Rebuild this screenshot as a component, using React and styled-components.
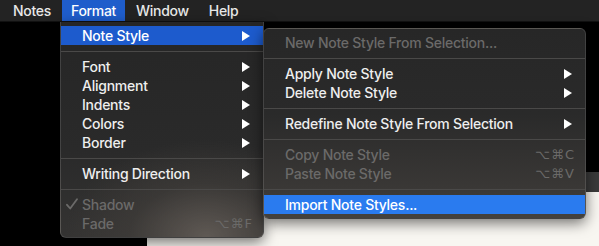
import React from "react";
import styled, { createGlobalStyle } from "styled-components";

const GlobalStyle = createGlobalStyle`
  html, body {
    margin: 0;
    padding: 0;
    background: #000;
  }
  body {
    font-family: Inter, "Noto Sans", "DejaVu Sans", sans-serif;
    -webkit-font-smoothing: antialiased;
  }
`;

const mainItems = [
  { label: "Note Style", arrow: true, active: true },
  { sep: true },
  { label: "Font", arrow: true },
  { label: "Alignment", arrow: true },
  { label: "Indents", arrow: true },
  { label: "Colors", arrow: true },
  { label: "Border", arrow: true },
  { sep: true },
  { label: "Writing Direction", arrow: true },
  { sep: true },
  { label: "Shadow", disabled: true, checked: true },
  { label: "Fade", disabled: true, shortcut: "⌥⌘F" },
];

const subItems = [
  { label: "New Note Style From Selection...", disabled: true },
  { sep: true },
  { label: "Apply Note Style", arrow: true },
  { label: "Delete Note Style", arrow: true },
  { sep: true },
  { label: "Redefine Note Style From Selection", arrow: true },
  { sep: true },
  { label: "Copy Note Style", disabled: true, shortcut: "⌥⌘C" },
  { label: "Paste Note Style", disabled: true, shortcut: "⌥⌘V" },
  { sep: true },
  { label: "Import Note Styles...", selected: true },
];

function Arrow() {
  return (
    <ArrowIcon width="8" height="10" viewBox="0 0 8 10">
      <polygon points="0,0 8,5 0,10" fill="currentColor" />
    </ArrowIcon>
  );
}

function Check() {
  return (
    <CheckIcon width="12" height="12" viewBox="0 0 12 12">
      <path
        d="M1 6.8 L4.2 10.5 L11 1.2"
        fill="none"
        stroke="currentColor"
        strokeWidth="1.8"
        strokeLinecap="round"
        strokeLinejoin="round"
      />
    </CheckIcon>
  );
}

function MenuList({ items }) {
  return items.map((it, i) =>
    it.sep ? (
      <Separator key={i} />
    ) : (
      <Item key={i} $disabled={it.disabled} $active={it.active} $selected={it.selected}>
        {it.checked && <Check />}
        <Label>{it.label}</Label>
        {it.shortcut && <Shortcut>{it.shortcut}</Shortcut>}
        {it.arrow && <Arrow />}
      </Item>
    )
  );
}

export default function App() {
  return (
    <Screen>
      <GlobalStyle />
      <MenuBar>
        <BarItem>Notes</BarItem>
        <BarItem $open>Format</BarItem>
        <BarItem>Window</BarItem>
        <BarItem>Help</BarItem>
      </MenuBar>
      <Desktop>
        <Sidebar />
        <NotesWindow>
          <WindowTop />
          <Toolbar />
          <NoteBody />
        </NotesWindow>
      </Desktop>
      <FormatMenu>
        <MenuList items={mainItems} />
      </FormatMenu>
      <SubMenu>
        <MenuList items={subItems} />
      </SubMenu>
    </Screen>
  );
}

const Screen = styled.div`
  position: relative;
  width: 599px;
  height: 246px;
  overflow: hidden;
  background: #000;
  display: flex;
  flex-direction: column;
`;

const MenuBar = styled.div`
  height: 22px;
  flex: none;
  display: flex;
  align-items: stretch;
  padding-left: 4px;
  gap: 2px;
  background: #232323;
  border-bottom: 1px solid #111;
  box-sizing: border-box;
`;

const BarItem = styled.div`
  display: flex;
  align-items: center;
  padding: 0 9px 1px;
  font-size: 14px;
  font-weight: 500;
  letter-spacing: -0.3px;
  color: ${(p) => (p.$open ? "#fff" : "#e8e8e8")};
  background: ${(p) => (p.$open ? "#1f5dcb" : "transparent")};
`;

const Desktop = styled.div`
  flex: 1;
  display: flex;
`;

const Sidebar = styled.div`
  width: 147px;
  background: #000;
`;

const NotesWindow = styled.div`
  flex: 1;
  display: flex;
  flex-direction: column;
`;

const WindowTop = styled.div`
  height: 150px;
  background: #000;
`;

const Toolbar = styled.div`
  height: 20px;
  background: #3a3a3a;
`;

const NoteBody = styled.div`
  flex: 1;
  background: #f8f6f1;
`;

const MenuPanel = styled.div`
  position: absolute;
  padding: 4px 0;
  box-sizing: border-box;
  box-shadow: 0 4px 14px rgba(0, 0, 0, 0.55);
  border: 1px solid rgba(255, 255, 255, 0.12);
`;

const FormatMenu = styled(MenuPanel)`
  left: 60px;
  top: 22px;
  width: 204px;
  border-top: none;
  border-radius: 0 0 6px 6px;
  background:
    radial-gradient(ellipse 70% 45% at 72% 100%, #5f5954 0%, rgba(64, 61, 58, 0.65) 55%, rgba(43, 42, 42, 0) 100%),
    linear-gradient(to bottom, #262626 0%, #2a2a2a 60%, #343332 100%);
`;

const SubMenu = styled(MenuPanel)`
  left: 263px;
  top: 28px;
  width: 323px;
  border-radius: 6px;
  background: linear-gradient(to bottom, #272727 0%, #2a2a2a 45%, #3a3836 85%, #44413d 100%);
`;

const Item = styled.div`
  position: relative;
  height: 19px;
  display: flex;
  align-items: center;
  padding: 0 12px 1px 21px;
  box-sizing: border-box;
  font-size: 14px;
  font-weight: 500;
  color: ${(p) => (p.$disabled ? "#6b6a69" : "#eeeeee")};
  background: ${(p) => (p.$active ? "#1d5bcd" : p.$selected ? "#2a7bef" : "transparent")};
  ${(p) => (p.$active || p.$selected ? "color: #fff;" : "")}
`;

const Label = styled.span`
  flex: 1;
  white-space: nowrap;
  letter-spacing: -0.25px;
`;

const Shortcut = styled.span`
  font-family: "DejaVu Sans", sans-serif;
  font-size: 13px;
  letter-spacing: 1px;
  color: #6b6a69;
  margin-right: -2px;
`;

const ArrowIcon = styled.svg`
  flex: none;
  color: #fff;
  margin: 1px 1px 0 0;
`;

const CheckIcon = styled.svg`
  position: absolute;
  left: 5px;
  top: 3px;
  color: #6b6a69;
`;

const Separator = styled.div`
  height: 12px;
  display: flex;
  align-items: center;
  &::after {
    content: "";
    flex: 1;
    height: 1px;
    background: #4a4948;
  }
`;
